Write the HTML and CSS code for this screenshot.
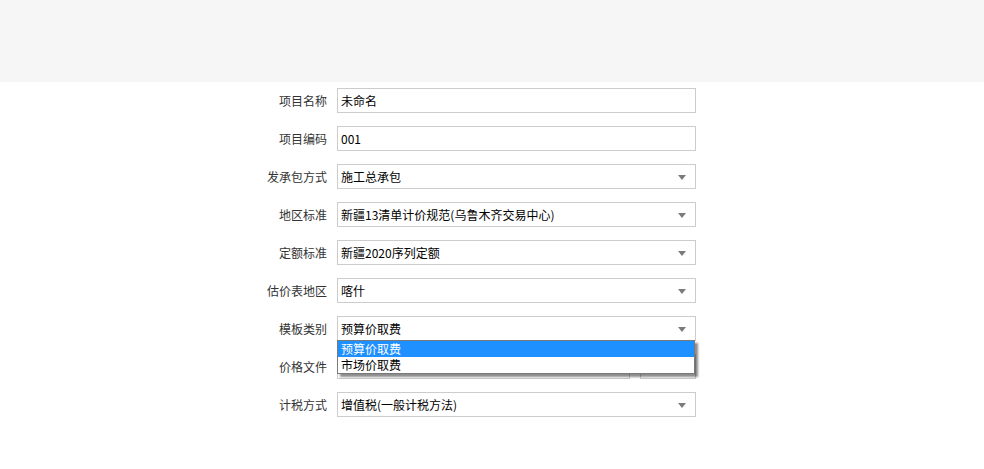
FILE: index.html
```html
<!DOCTYPE html>
<html lang="zh">
<head>
<meta charset="utf-8">
<title>项目设置</title>
<link rel="stylesheet" href="styles.css">
</head>
<body>
<div class="topbar"></div>
<form class="form">
  <div class="row">
    <label class="label">项目名称</label>
    <div class="field"><div class="box">未命名</div></div>
  </div>
  <div class="row">
    <label class="label">项目编码</label>
    <div class="field"><div class="box">001</div></div>
  </div>
  <div class="row">
    <label class="label">发承包方式</label>
    <div class="field"><div class="box select"><span>施工总承包</span><i class="arrow"></i></div></div>
  </div>
  <div class="row">
    <label class="label">地区标准</label>
    <div class="field"><div class="box select"><span>新疆13清单计价规范(乌鲁木齐交易中心)</span><i class="arrow"></i></div></div>
  </div>
  <div class="row">
    <label class="label">定额标准</label>
    <div class="field"><div class="box select"><span>新疆2020序列定额</span><i class="arrow"></i></div></div>
  </div>
  <div class="row">
    <label class="label">估价表地区</label>
    <div class="field"><div class="box select"><span>喀什</span><i class="arrow"></i></div></div>
  </div>
  <div class="row row-open">
    <label class="label">模板类别</label>
    <div class="field">
      <div class="box select"><span>预算价取费</span><i class="arrow"></i></div>
      <ul class="dropdown">
        <li class="opt active">预算价取费</li>
        <li class="opt">市场价取费</li>
      </ul>
    </div>
  </div>
  <div class="row">
    <label class="label">价格文件</label>
    <div class="field split">
      <div class="box grow"></div>
      <div class="box btn"></div>
    </div>
  </div>
  <div class="row">
    <label class="label">计税方式</label>
    <div class="field"><div class="box select"><span>增值税(一般计税方法)</span><i class="arrow"></i></div></div>
  </div>
</form>
</body>
</html>
```

FILE: styles.css
```css
html, body {
  margin: 0;
  padding: 0;
  background: #ffffff;
  font-family: "Noto Sans CJK SC", "Noto Sans", "Liberation Sans", sans-serif;
  font-size: 12px;
  color: #333333;
}

.topbar {
  height: 82px;
  background: #f6f6f6;
}

.form {
  margin: 6px 0 0 247px;
  display: flex;
  flex-direction: column;
  gap: 13px;
  width: 449px;
}

.row {
  display: flex;
  align-items: center;
  gap: 10px;
  height: 25px;
}

.label {
  width: 80px;
  text-align: right;
  color: #333333;
  line-height: 25px;
  white-space: nowrap;
}

.field {
  position: relative;
  width: 359px;
  height: 25px;
  display: flex;
}

.box {
  box-sizing: border-box;
  width: 100%;
  height: 25px;
  border: 1px solid #cccccc;
  background: #ffffff;
  color: #000000;
  padding: 0 3px;
  line-height: 23px;
  display: flex;
  align-items: center;
  white-space: nowrap;
}

.select {
  justify-content: space-between;
  padding-right: 9px;
}

.arrow {
  width: 0;
  height: 0;
  border-left: 4px solid transparent;
  border-right: 4px solid transparent;
  border-top: 5px solid #7b7b7b;
  margin-top: 2px;
}

.split {
  gap: 10px;
}

.grow {
  flex: 1;
  width: auto;
}

.btn {
  width: 56px;
  flex: none;
}

.row-open {
  position: relative;
  z-index: 5;
}

.dropdown {
  position: absolute;
  top: 24px;
  left: 0;
  width: 358px;
  box-sizing: border-box;
  margin: 0;
  padding: 0;
  list-style: none;
  background: #ffffff;
  border: 1px solid #7a7a7a;
  box-shadow: 3px 3px 2px rgba(0, 0, 0, 0.45);
}

.opt {
  height: 16px;
  line-height: 16px;
  padding: 0 3px;
  color: #000000;
  font-size: 12px;
  overflow: hidden;
}

.opt.active {
  background: #1e90ff;
  color: #ffffff;
}
```
